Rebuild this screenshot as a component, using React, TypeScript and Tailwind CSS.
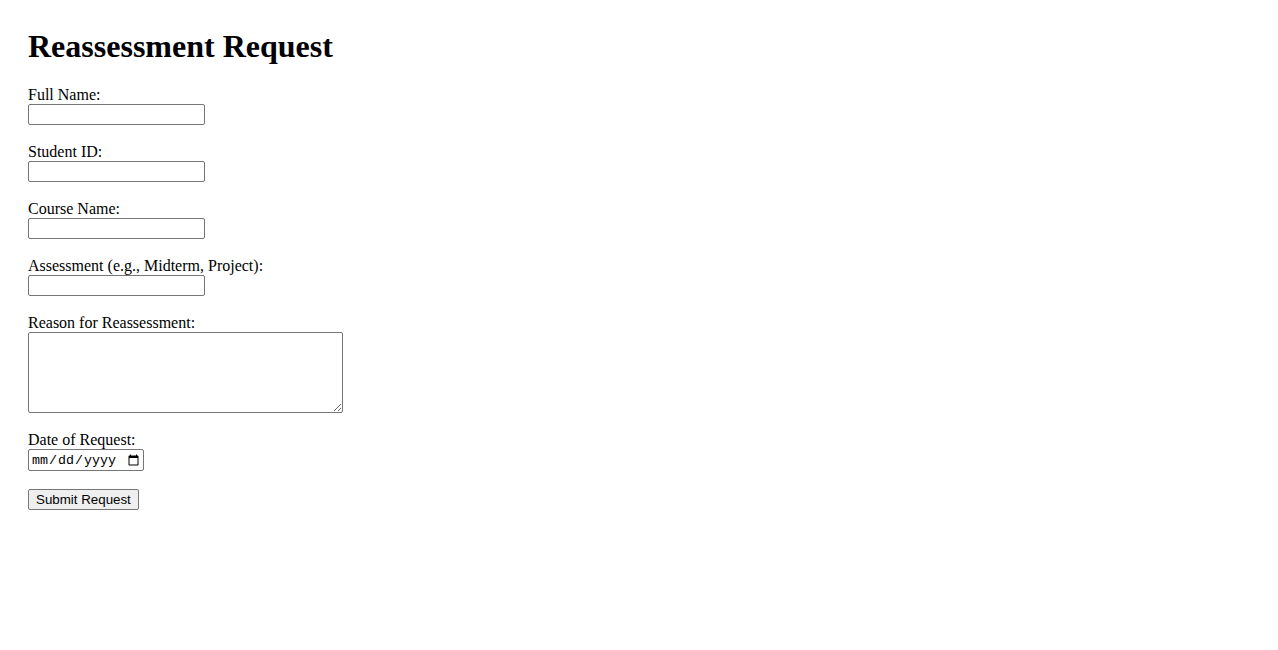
import React from 'react';

const serif = { fontFamily: '"Liberation Serif", "Times New Roman", serif' };

const fields = [
  { id: 'fullName', label: 'Full Name:' },
  { id: 'studentId', label: 'Student ID:' },
  { id: 'courseName', label: 'Course Name:' },
  { id: 'assessment', label: 'Assessment (e.g., Midterm, Project):' },
];

export default function App() {
  return (
    <div className="min-h-screen bg-white text-black pl-[28px] pt-[28px] font-['Liberation_Serif','Times_New_Roman',serif]" style={serif}>
      <h1 className="text-[32px] leading-[37px] font-bold mb-[21px]">Reassessment Request</h1>
      <form onSubmit={(e) => e.preventDefault()} className="flex flex-col items-start">
        {fields.map((f) => (
          <div key={f.id} className="flex flex-col items-start mb-[18px]">
            <label htmlFor={f.id} className="text-[16px] leading-[18px]">
              {f.label}
            </label>
            <input
              id={f.id}
              type="text"
              className="w-[177px] h-[21px] border border-[#767676] rounded-[2px] px-[2px] text-[13.33px] font-['Liberation_Sans',Arial,sans-serif] outline-none"
            />
          </div>
        ))}

        <div className="flex flex-col items-start mb-[18px]">
          <label htmlFor="reason" className="text-[16px] leading-[18px]">
            Reason for Reassessment:
          </label>
          <textarea
            id="reason"
            className="w-[315px] h-[81px] border border-[#767676] rounded-[2px] px-[2px] text-[13.33px] font-['Liberation_Mono',monospace] resize"
          />
        </div>

        <div className="flex flex-col items-start mb-[18px]">
          <label htmlFor="date" className="text-[16px] leading-[18px]">
            Date of Request:
          </label>
          <input
            id="date"
            type="date"
            className="w-[116px] h-[22px] border border-[#767676] rounded-[2px] pl-[2px] pr-[1px] pt-[1px] text-[13.33px] font-['Liberation_Mono',monospace]"
          />
        </div>

        <button
          type="submit"
          className="h-[21px] px-[7px] bg-[#efefef] border border-[#767676] rounded-[2px] text-[13.33px] leading-[15px] font-['Liberation_Sans',Arial,sans-serif] text-black"
        >
          Submit Request
        </button>
      </form>
    </div>
  );
}
